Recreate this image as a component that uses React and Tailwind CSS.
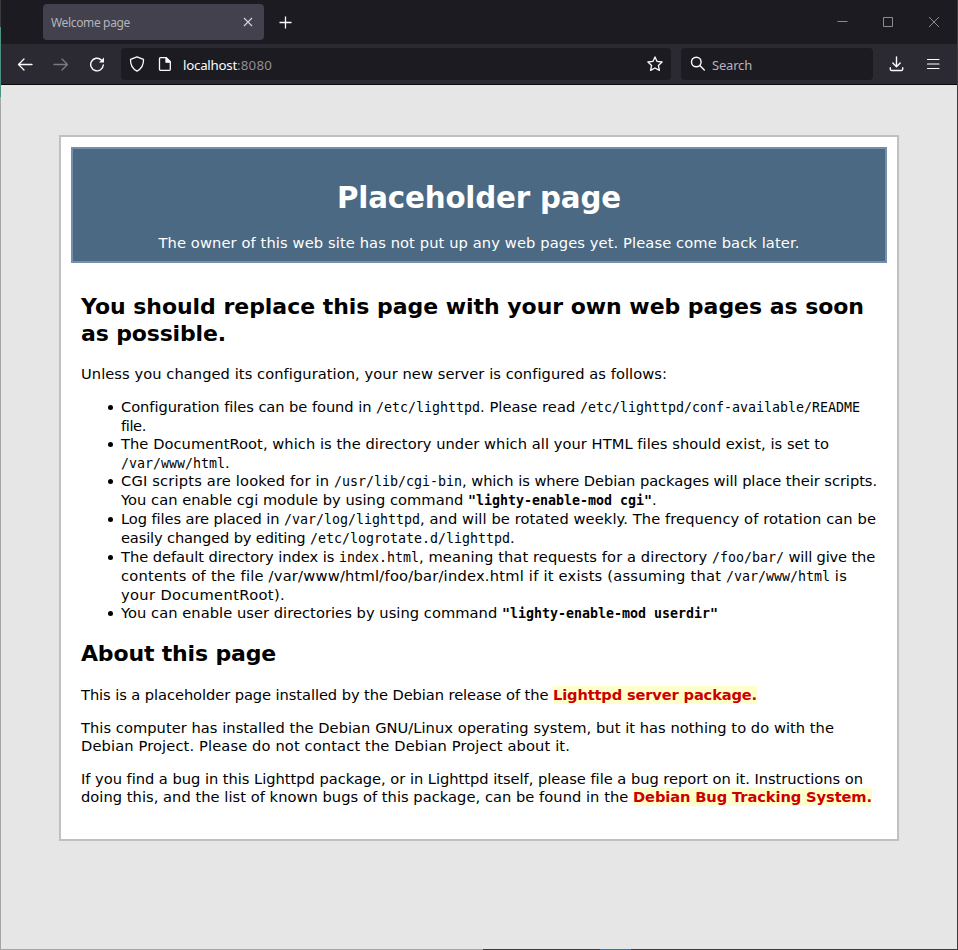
import { useLayoutEffect, useRef, useState } from "react";

// A run of text whose tracking is adjusted so that it fills a given width.
function Fit({ w, className = "", children }) {
  const ref = useRef(null);
  const [spacing, setSpacing] = useState(0);
  useLayoutEffect(() => {
    const natural = ref.current.getBoundingClientRect().width;
    setSpacing((w - natural) / children.length);
  }, []);
  return (
    <span ref={ref} className={"inline-block whitespace-pre " + className} style={{ letterSpacing: spacing + "px" }}>
      {children}
    </span>
  );
}

const mono = "font-['DejaVu_Sans_Mono',monospace] text-[13.3px]";

function Code({ w, children }) {
  return <Fit w={w} className={mono}>{children}</Fit>;
}

function Command({ w, children }) {
  return <Fit w={w} className={mono + " font-bold"}>{children}</Fit>;
}

function Line({ tall, children }) {
  return <div className={"flex items-baseline whitespace-pre " + (tall ? "h-[19px]" : "h-[18px]")}>{children}</div>;
}

function Item({ children }) {
  return (
    <li className="flex">
      <span className="mr-2 mt-[7px] size-[5px] shrink-0 rounded-full bg-black" />
      <div>{children}</div>
    </li>
  );
}

function TabBar() {
  return (
    <div className="flex h-11 bg-[#1c1b22] pl-[42px] pt-1">
      <div className="flex h-9 w-[221px] items-center justify-between rounded bg-[#42414d] pl-2 pr-[11px] text-[#b5b4ba]">
        <Fit w={79} className="pt-0.5 text-[12px] leading-4">Welcome page</Fit>
        <svg width="10" height="10" viewBox="0 0 10 10" fill="none" stroke="#d8d8dc" strokeWidth="1.1"><path d="M1 1l8 8M9 1L1 9" /></svg>
      </div>
      <svg className="ml-[15px] mt-3" width="13" height="13" viewBox="0 0 13 13" fill="none" stroke="#fbfbfe" strokeWidth="1.3"><path d="M6.5 .5v12M.5 6.5h12" /></svg>
      <div className="ml-auto mr-[17px] mt-[13px] flex gap-[35px]">
        <svg width="11" height="11" viewBox="0 0 11 11" stroke="#8c8b90"><path d="M.5 4.5h10" /></svg>
        <svg width="11" height="11" viewBox="0 0 11 11" fill="none" stroke="#8c8b90"><path d="M.5 .5h9v9h-9z" /></svg>
        <svg width="11" height="11" viewBox="0 0 11 11" fill="none" stroke="#8c8b90"><path d="M0 0l10 10M10 0L0 10" /></svg>
      </div>
    </div>
  );
}

function Toolbar() {
  return (
    <div className="flex h-[41px] items-center border-b border-[#0c0c0d] bg-[#2b2a33]">
      <svg className="ml-4" width="16" height="16" viewBox="0 0 16 16" fill="none" stroke="#fbfbfe" strokeWidth="1.3" strokeLinecap="round" strokeLinejoin="round"><path d="M15 8.500H1.500M7 3L1.500 8.500 7 14" /></svg>
      <svg className="ml-5" width="16" height="16" viewBox="0 0 16 16" fill="none" stroke="#7c7b82" strokeWidth="1.3" strokeLinecap="round" strokeLinejoin="round"><path d="M1 8.500h13.500M9 3l5.500 5.500L9 14" /></svg>
      <svg className="ml-5" width="16" height="16" viewBox="0 0 16 16" fill="none" stroke="#fbfbfe" strokeWidth="1.4" strokeLinecap="round"><path d="M14.300 9a6.300 6.300 0 1 1-2-5.100l1.200 1.200" /><path d="M15 1.500v5h-5z" fill="#fbfbfe" stroke="none" /></svg>
      <div className="ml-4 flex h-8 w-[550px] items-center rounded bg-[#1c1b22]">
        <svg className="ml-2" width="16" height="16" viewBox="0 0 16 16" fill="none" stroke="#fbfbfe" strokeWidth="1.3" strokeLinejoin="round"><path d="M8 .8l6.500 2.500c.2 5.200-1.900 9.500-6.500 11.800C3.400 12.800 1.300 8.500 1.500 3.300z" /></svg>
        <svg className="ml-3" width="16" height="16" viewBox="0 0 16 16" fill="none" stroke="#fbfbfe" strokeWidth="1.3" strokeLinejoin="round"><path d="M3.500 1.700h5.800l4 4v7.600a1 1 0 0 1-1 1H3.500a1 1 0 0 1-1-1V2.700a1 1 0 0 1 1-1z" /><path d="M9 1.700v4.500h4.300z" fill="#fbfbfe" /></svg>
        <div className="ml-[10px] flex pt-[3px] text-[13.3px]">
          <Fit w={54} className="text-[#fbfbfe]">localhost</Fit>
          <Fit w={35} className="text-[#8f8e95]">:8080</Fit>
        </div>
        <svg className="ml-auto mr-2" width="16" height="16" viewBox="0 0 16 16" fill="none" stroke="#fbfbfe" strokeWidth="1.3" strokeLinejoin="round"><path d="M8 .9l2.100 4.500 5 .6-3.700 3.400 1 5L8 12l-4.400 2.400 1-5L.9 6l5-.6z" /></svg>
      </div>
      <div className="ml-[10px] flex h-8 w-48 items-center rounded bg-[#1c1b22]">
        <svg className="ml-[9px]" width="16" height="16" viewBox="0 0 16 16" fill="none" stroke="#fbfbfe" strokeWidth="1.4" strokeLinecap="round"><circle cx="6.300" cy="6" r="4.800" /><path d="M9.800 9.500l4.500 4.500" /></svg>
        <Fit w={40} className="ml-[6px] pt-[3px] text-[13px] text-[#b5b4ba]">Search</Fit>
      </div>
      <svg className="ml-4" width="16" height="16" viewBox="0 0 16 16" fill="none" stroke="#fbfbfe" strokeWidth="1.4" strokeLinecap="round" strokeLinejoin="round"><path d="M7.500 1v9.500M3.800 7l3.700 3.700L11.200 7M1.300 11.800v1.400a1.300 1.300 0 0 0 1.300 1.300h9.800a1.300 1.300 0 0 0 1.300-1.300v-1.400" /></svg>
      <svg className="ml-5" width="16" height="16" viewBox="0 0 16 16" stroke="#fbfbfe" strokeWidth="1.2" strokeLinecap="round"><path d="M2.500 3.500h11.500M2.500 8h11.500M2.500 12.500h11.500" /></svg>
    </div>
  );
}

function Page() {
  return (
    <div className="flex-1 bg-[#e6e6e6] pl-[58px] pt-[50px] font-['DejaVu_Sans',Verdana,sans-serif] text-[14.67px] leading-[18px] text-black">
      <div className="h-[706px] w-[840px] border-2 border-[#c0c0c0] bg-white p-[10px]">
        <header className="flex h-[116px] flex-col items-center border-2 border-[#7590ae] bg-[#4b6983] text-white">
          <h1 className="mt-[31px] h-9 text-[29.3px] font-bold leading-9"><Fit w={284}>Placeholder page</Fit></h1>
          <p className="mt-[18px]"><Fit w={641}>The owner of this web site has not put up any web pages yet. Please come back later.</Fit></p>
        </header>
        <main className="px-[10px]">
          <h2 className="mt-[30px] text-[22px] font-bold leading-[27px]">
            <div className="h-[27px]"><Fit w={783}>You should replace this page with your own web pages as soon</Fit></div>
            <div className="h-[27px]"><Fit w={145}>as possible.</Fit></div>
          </h2>
          <p className="mt-[18px] h-[18px]"><Fit w={586}>Unless you changed its configuration, your new server is configured as follows:</Fit></p>
          <ul className="mt-[15px] pl-[27px]">
            <Item>
              <Line tall><Fit w={255}>{"Configuration files can be found in "}</Fit><Code w={104}>/etc/lighttpd</Code><Fit w={100}>{". Please read "}</Fit><Code w={280}>/etc/lighttpd/conf-available/README</Code></Line>
              <Line><Fit w={25}>file.</Fit></Line>
            </Item>
            <Item>
              <Line tall><Fit w={708}>The DocumentRoot, which is the directory under which all your HTML files should exist, is set to</Fit></Line>
              <Line><Code w={104}>/var/www/html</Code><Fit w={5}>.</Fit></Line>
            </Item>
            <Item>
              <Line tall><Fit w={213}>{"CGI scripts are looked for in "}</Fit><Code w={128}>/usr/lib/cgi-bin</Code><Fit w={415}>, which is where Debian packages will place their scripts.</Fit></Line>
              <Line tall><Fit w={347}>{"You can enable cgi module by using command "}</Fit><Command w={184}>{"\"lighty-enable-mod cgi\""}</Command><Fit w={5}>.</Fit></Line>
            </Item>
            <Item>
              <Line tall><Fit w={163}>{"Log files are placed in "}</Fit><Code w={136}>/var/log/lighttpd</Code><Fit w={456}>, and will be rotated weekly. The frequency of rotation can be</Fit></Line>
              <Line tall><Fit w={189}>{"easily changed by editing "}</Fit><Code w={200}>/etc/logrotate.d/lighttpd</Code><Fit w={5}>.</Fit></Line>
            </Item>
            <Item>
              <Line tall><Fit w={218}>{"The default directory index is "}</Fit><Code w={80}>index.html</Code><Fit w={293}>{", meaning that requests for a directory "}</Fit><Code w={72}>/foo/bar/</Code><Fit w={91}>{" will give the"}</Fit></Line>
              <Line tall><Fit w={605}>{"contents of the file /var/www/html/foo/bar/index.html if it exists (assuming that "}</Fit><Code w={104}>/var/www/html</Code><Fit w={17}>{" is"}</Fit></Line>
              <Line><Fit w={164}>your DocumentRoot).</Fit></Line>
            </Item>
            <Item>
              <Line><Fit w={381}>{"You can enable user directories by using command "}</Fit><Command w={216}>{"\"lighty-enable-mod userdir\""}</Command></Line>
            </Item>
          </ul>
          <h2 className="mt-[18px] h-[27px] text-[22px] font-bold leading-[27px]"><Fit w={195}>About this page</Fit></h2>
          <div className="mt-[19px] flex flex-col gap-[15px]">
            <p className="flex h-[18px]"><Fit w={472}>{"This is a placeholder page installed by the Debian release of the "}</Fit><Fit w={204} className="bg-[#ffffcc] font-bold text-[#cc0000]">Lighttpd server package.</Fit></p>
            <div>
              <Line><Fit w={753}>This computer has installed the Debian GNU/Linux operating system, but it has nothing to do with the</Fit></Line>
              <Line><Fit w={489}>Debian Project. Please do not contact the Debian Project about it.</Fit></Line>
            </div>
            <div>
              <Line><Fit w={782}>If you find a bug in this Lighttpd package, or in Lighttpd itself, please file a bug report on it. Instructions on</Fit></Line>
              <Line><Fit w={552}>{"doing this, and the list of known bugs of this package, can be found in the "}</Fit><Fit w={239} className="bg-[#ffffcc] font-bold text-[#cc0000]">Debian Bug Tracking System.</Fit></Line>
            </div>
          </div>
        </main>
      </div>
    </div>
  );
}

export default function App() {
  return (
    <div className="flex h-[950px] w-[958px] flex-col overflow-hidden font-['Noto_Sans','Open_Sans',sans-serif]">
      <div className="flex h-[949px]">
        <div className="w-px bg-[#a5a5a5]"><div className="h-[27px] bg-[#3c3c3c]" /><div className="h-[70px] bg-[#4b9484]" /></div>
        <div className="flex w-[956px] flex-col">
          <TabBar />
          <Toolbar />
          <Page />
        </div>
        <div className="w-px bg-[#3c3c3c]" />
      </div>
      <div className="flex h-px"><div className="w-[483px] bg-[#a5a5a5]" /><div className="w-[117px] bg-[#3c3c3c]" /><div className="w-[31px] bg-[#4a6f96]" /><div className="flex-1 bg-[#3c3c3c]" /></div>
    </div>
  );
}
